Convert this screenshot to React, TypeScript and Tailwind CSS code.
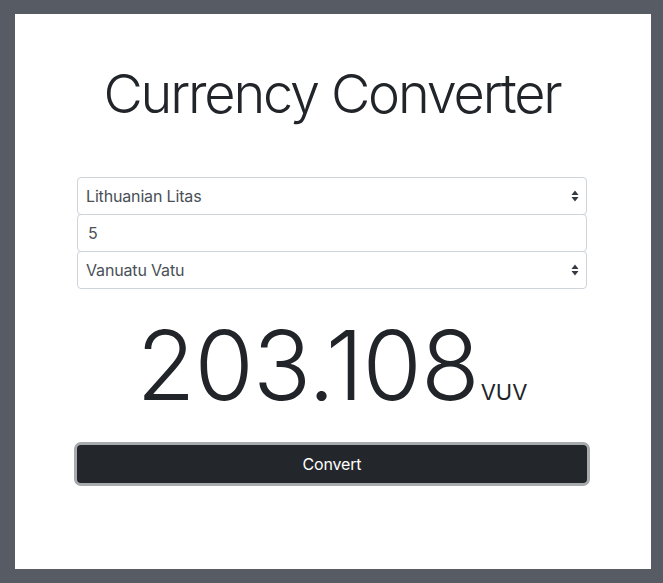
import { useState } from "react";

function Arrows() {
  return (
    <svg
      width="8"
      height="12"
      viewBox="0 0 8 12"
      className="pointer-events-none absolute right-[8px] top-1/2 -translate-y-1/2"
    >
      <path d="M4 0.5L7.5 5H0.5z" fill="#343a40" />
      <path d="M4 11.5L0.5 7H7.5z" fill="#343a40" />
    </svg>
  );
}

function CurrencySelect({ value, options }: { value: string; options: string[] }) {
  return (
    <div className="relative -mt-px first:mt-0">
      <select
        defaultValue={value}
        className="h-[38px] w-full appearance-none rounded-[4px] border border-[#ced4da] bg-white pl-2 pr-7 text-base tracking-[-0.01em] text-[#495057] outline-none"
      >
        {options.map((o) => (
          <option key={o}>{o}</option>
        ))}
      </select>
      <Arrows />
    </div>
  );
}

export default function App() {
  const [amount, setAmount] = useState("5");
  const currencies = ["Lithuanian Litas", "Vanuatu Vatu", "Euro", "US Dollar"];

  return (
    <div className="min-h-[583px] bg-[#565b64] px-[15px] pt-[14px] font-['Inter','Liberation_Sans',sans-serif]">
      <div className="h-[555px] w-[636px] bg-white">
        <div className="ml-[62px] flex w-[510px] flex-col pt-[48px]">
          <h1 className="whitespace-nowrap text-center text-[54px] font-light leading-[1.2] tracking-[-0.04em] text-[#212529]">
            Currency Converter
          </h1>

          <div className="mt-[50px] flex flex-col">
            <CurrencySelect value="Lithuanian Litas" options={currencies} />
            <div className="-mt-px">
              <input
                value={amount}
                onChange={(e) => setAmount(e.target.value)}
                className="h-[38px] w-full rounded-[4px] border border-[#ced4da] bg-white px-[10px] text-base text-[#495057] outline-none"
              />
            </div>
            <CurrencySelect value="Vanuatu Vatu" options={currencies} />
          </div>

          <div className="mt-[19px] whitespace-nowrap text-center text-[#212529]">
            <span className="text-[96px] font-light leading-[1.2] tracking-[-0.01em]">203.108</span>
            <span className="ml-[2px] text-[22px] leading-none">VUV</span>
          </div>

          <button className="mt-[22px] h-[38px] w-full rounded-[4px] bg-[#23272b] text-base tracking-[-0.01em] text-white shadow-[0_0_0_3px_rgba(82,88,93,0.5)]">
            Convert
          </button>
        </div>
      </div>
    </div>
  );
}
